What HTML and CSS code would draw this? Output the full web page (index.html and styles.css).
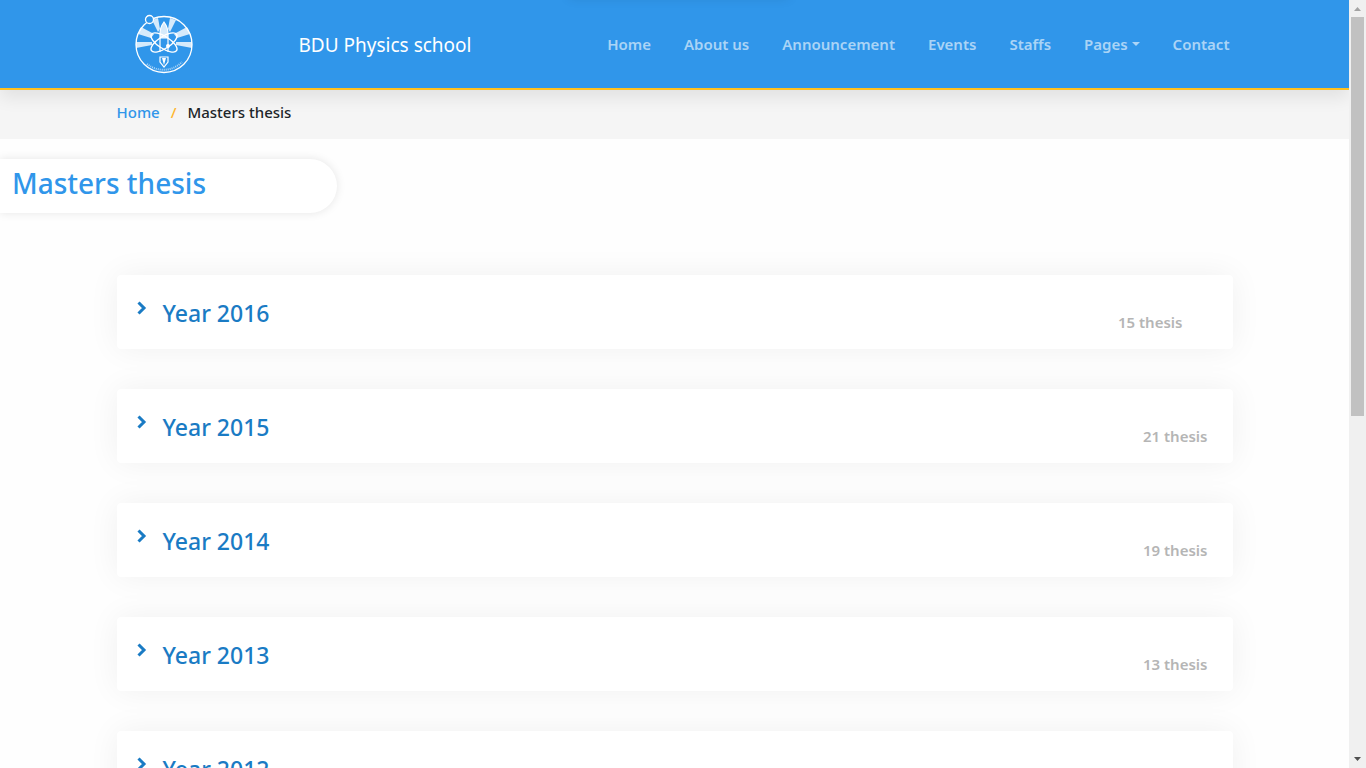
FILE: index.html
```html
<!DOCTYPE html>
<html lang="en">
<head>
<meta charset="utf-8">
<meta name="viewport" content="width=device-width, initial-scale=1">
<title>Masters thesis - BDU Physics school</title>
<link rel="stylesheet" href="styles.css">
</head>
<body>
<div class="page">
  <header class="header">
    <div class="container header-row">
      <a class="logo" href="#" aria-label="BDU Physics school home">
        <svg viewBox="0 0 60 60" width="60" height="60" fill="none" stroke="#fff" aria-hidden="true">
          <g fill="#fff" fill-opacity="0.8" stroke="none">
            <path d="M2 28 18 28 18 31 2 34z"/>
            <path d="M7 13 20 20 17 24 4 20z"/>
            <path d="M18 6 24 4 26 15 24 18z"/>
            <path d="M42 6 36 4 34 15 36 18z"/>
            <path d="M53 13 40 20 43 24 56 20z"/>
            <path d="M58 28 42 28 42 31 58 34z"/>
          </g>
          <path d="M30 8c-3 4-4 7-4 12v4h8v-4c0-5-1-8-4-12z" fill="#fff" fill-opacity="0.8" stroke-width="1.200"/>
          <circle cx="30" cy="30.500" r="28" stroke-width="1.300"/>
          <circle cx="15.500" cy="5.500" r="4" fill="#3096ea" stroke-width="1.300"/>
          <path d="M26 24v14M34 24v14M26 43v5l4 5 4-5v-5z" stroke-width="1.200"/>
          <path d="m28 44 2 7 2-7z" fill="#fff" stroke="none"/>
          <ellipse cx="30" cy="28.500" rx="6" ry="15" transform="rotate(-57 30 28.500)" stroke-width="1.400"/>
          <ellipse cx="30" cy="28.500" rx="6" ry="15" transform="rotate(57 30 28.500)" stroke-width="1.400"/>
          <circle cx="34" cy="32" r="2" fill="#fff" stroke="none"/>
          <path d="M13 50c10 8 25 8 35-2" stroke-width="2" stroke-opacity="0.6" stroke-dasharray="1 1"/>
        </svg>
      </a>
      <a class="brand" href="#">BDU Physics school</a>
      <nav class="nav" aria-label="Main">
        <a href="#">Home</a>
        <a href="#">About us</a>
        <a href="#">Announcement</a>
        <a href="#">Events</a>
        <a href="#">Staffs</a>
        <button class="dropdown" type="button" aria-haspopup="true">Pages</button>
        <a href="#">Contact</a>
      </nav>
    </div>
  </header>
  <nav class="crumbs" aria-label="Breadcrumb">
    <ol class="container crumb-list">
      <li><a href="#">Home</a></li>
      <li aria-current="page">Masters thesis</li>
    </ol>
  </nav>
  <main>
    <h1 class="title">Masters thesis</h1>
    <div class="container years">
      <section class="card">
        <h2><button type="button"><svg class="chevron" viewBox="0 0 10 14" aria-hidden="true"><path d="m1.500 1.500 5.500 5.500-5.500 5.500"/></svg>Year 2016</button></h2>
        <span class="count inset">15 thesis</span>
      </section>
      <section class="card">
        <h2><button type="button"><svg class="chevron" viewBox="0 0 10 14" aria-hidden="true"><path d="m1.500 1.500 5.500 5.500-5.500 5.500"/></svg>Year 2015</button></h2>
        <span class="count">21 thesis</span>
      </section>
      <section class="card">
        <h2><button type="button"><svg class="chevron" viewBox="0 0 10 14" aria-hidden="true"><path d="m1.500 1.500 5.500 5.500-5.500 5.500"/></svg>Year 2014</button></h2>
        <span class="count">19 thesis</span>
      </section>
      <section class="card">
        <h2><button type="button"><svg class="chevron" viewBox="0 0 10 14" aria-hidden="true"><path d="m1.500 1.500 5.500 5.500-5.500 5.500"/></svg>Year 2013</button></h2>
        <span class="count">13 thesis</span>
      </section>
      <section class="card">
        <h2><button type="button"><svg class="chevron" viewBox="0 0 10 14" aria-hidden="true"><path d="m1.500 1.500 5.500 5.500-5.500 5.500"/></svg>Year 2012</button></h2>
      </section>
    </div>
  </main>
</div>
<div class="scrollbar" aria-hidden="true">
  <svg class="arrow" viewBox="0 0 17 17"><path fill="#a3a3a3" d="M5 11h7L8.500 7z"/></svg>
  <div class="track"><div class="thumb"></div></div>
  <svg class="arrow" viewBox="0 0 17 17"><path fill="#505050" d="M5 6h7l-3.500 4z"/></svg>
</div>
</body>
</html>
```
FILE: styles.css
```css
* {
  box-sizing: border-box;
}

body {
  display: flex;
  height: 100vh;
  margin: 0;
  overflow: hidden;
  background: #fefefe;
  color: #212529;
  font-family: "Segoe UI", "Noto Sans", "Open Sans", sans-serif;
  font-size: 15px;
  line-height: 24px;
}

a {
  color: inherit;
  text-decoration: none;
}

button {
  padding: 0;
  border: 0;
  background: none;
  color: inherit;
  font: inherit;
  cursor: pointer;
}

.page {
  position: relative;
  flex: 1;
  min-width: 0;
  overflow: hidden;
}

.page::before {
  content: "";
  position: absolute;
  z-index: 2;
  top: -20px;
  left: 50%;
  width: 220px;
  height: 16px;
  transform: translateX(-50%);
  box-shadow: 4px 2px 12px rgba(0, 0, 0, 0.1);
}

.container {
  width: 100%;
  max-width: 1140px;
  margin: 0 auto;
  padding: 0 12px;
}

.header {
  position: relative;
  background: #3096ea;
  border-bottom: 2px solid #ffc01e;
  box-shadow: 0 8px 16px rgba(0, 0, 0, 0.08);
}

.header-row {
  display: flex;
  align-items: center;
  height: 88px;
  padding: 0 15px 0 29px;
}

.logo {
  display: flex;
  width: 60px;
}

.brand {
  margin-left: 105px;
  padding-top: 2px;
  color: #fff;
  font-size: 19px;
}

.nav {
  display: flex;
  gap: 33px;
  margin-left: auto;
  color: rgba(255, 255, 255, 0.6);
  font-weight: 600;
}

.dropdown {
  display: flex;
  align-items: center;
  gap: 4px;
}

.dropdown::after {
  content: "";
  border: 4px solid transparent;
  border-top-color: currentColor;
  border-bottom: 0;
}

.crumbs {
  background: #f5f5f5;
}

.crumb-list {
  display: flex;
  padding-top: 10px;
  padding-bottom: 15px;
  list-style: none;
  color: #212529;
  font-weight: 500;
}

.crumb-list a {
  color: #3096ea;
}

.crumb-list li + li::before {
  content: "/";
  padding: 0 11px;
  color: #ffb52e;
}

.title {
  width: 25%;
  height: 54px;
  margin: 20px 0 62px;
  padding: 6px 12px;
  border-radius: 0 27px 27px 0;
  background: #fff;
  box-shadow: 0 0 10px rgba(0, 0, 0, 0.1);
  color: #3096ea;
  font-size: 28px;
  font-weight: 500;
  line-height: 36px;
}

.years {
  display: grid;
  gap: 40px;
}

.card {
  display: flex;
  justify-content: space-between;
  height: 74px;
  padding: 20px 25px 15px 20px;
  border-radius: 4px;
  background: #fff;
  box-shadow: 0 0 32px rgba(0, 0, 0, 0.06);
}

.card h2 {
  margin: 0;
  color: #1a7bc4;
  font-size: 23px;
  font-weight: 500;
  line-height: 36px;
}

.card button {
  display: flex;
  gap: 16px;
}

.chevron {
  width: 10px;
  height: 14px;
  margin-top: 6px;
  fill: none;
  stroke: #1a7bc4;
  stroke-width: 3;
}

.count {
  align-self: flex-end;
  color: #b5b5b5;
  font-size: 15px;
  font-weight: 600;
}

.inset {
  margin-right: 25px;
}

.scrollbar {
  display: flex;
  flex-direction: column;
  width: 17px;
  background: #f0f0f0;
}

.arrow {
  width: 17px;
  height: 17px;
}

.track {
  flex: 1;
  padding: 0 2px;
}

.thumb {
  height: 54.4%;
  background: #c1c1c1;
}
```
